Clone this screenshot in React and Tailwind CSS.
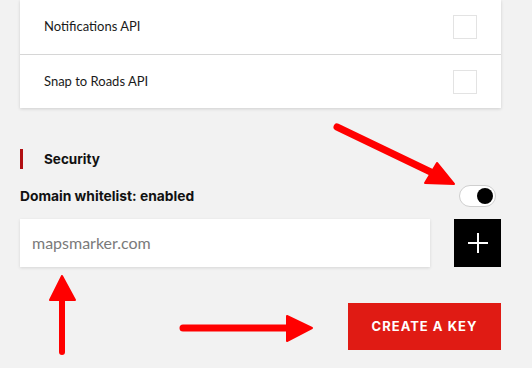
import React from "react";

const apis = ["Notifications API", "Snap to Roads API"];

const Arrows = () => (
  <svg
    className="absolute inset-0 pointer-events-none"
    width="532"
    height="368"
    viewBox="0 0 532 368"
  >
    <g fill="#ff0000" stroke="#ff0000" strokeLinecap="round" strokeLinejoin="round">
      <line x1="337" y1="127" x2="437" y2="175" strokeWidth="7" />
      <polygon points="437,163 425,183 454,184" strokeWidth="2" />
      <line x1="62" y1="352" x2="62" y2="298" strokeWidth="6" />
      <polygon points="62,276 50,300 75,300" strokeWidth="2" />
      <line x1="183" y1="328" x2="290" y2="328" strokeWidth="7" />
      <polygon points="287,316 287,341 312,328" strokeWidth="2" />
    </g>
  </svg>
);

const App = () => {
  return (
    <div
      className="relative w-[532px] h-[368px] overflow-hidden bg-[#f2f2f2] pl-5 pr-[31px]"
      style={{ fontFamily: "Lato, 'Open Sans', sans-serif" }}
    >
      <div className="bg-white shadow-[0_1px_3px_rgba(0,0,0,0.15)]">
        {apis.map((api, index) => (
          <div
            key={api}
            className={`flex items-center justify-between h-[54px] pl-6 pr-6 ${
              index > 0 ? "border-t border-[#d6d6d6]" : ""
            }`}
          >
            <span className="text-[13px] text-[#1a1a1a]">{api}</span>
            <span className="block w-[24px] h-[24px] border border-[#e3e3e3] bg-white"></span>
          </div>
        ))}
      </div>

      <div className="flex items-center h-[20px] mt-[41px]">
        <span className="block w-[3px] h-[20px] bg-[#b10f12]"></span>
        <span className="ml-[21px] text-[13.5px] font-bold text-[#111] font-[Inter,sans-serif]">
          Security
        </span>
      </div>

      <div className="flex items-center justify-between mt-[16px] h-[22px]">
        <span className="text-[13.8px] font-bold text-[#111] font-[Inter,sans-serif]">
          Domain whitelist: enabled
        </span>
        <span className="flex items-center justify-end w-[37px] h-[22px] mr-[5px] rounded-full bg-white border border-[#cfcfcf] pr-[2px]">
          <span className="block w-[16px] h-[16px] rounded-full bg-black"></span>
        </span>
      </div>

      <div className="flex items-stretch justify-between mt-[12px] h-[48px]">
        <div className="flex items-center w-[410px] bg-white shadow-[0_1px_3px_rgba(0,0,0,0.12)] pl-3">
          <span className="text-[16px] text-[#7a7a7a]">mapsmarker.com</span>
        </div>
        <button className="flex items-center justify-center w-[47px] bg-black">
          <svg width="22" height="22" viewBox="0 0 22 22">
            <path d="M11 1v20M1 11h20" stroke="#fff" strokeWidth="2" />
          </svg>
        </button>
      </div>

      <div className="flex justify-end mt-[36px]">
        <button className="w-[153px] h-[47px] bg-[#e01b14] text-white text-[13px] font-bold tracking-[1px] font-[Inter,sans-serif]">
          CREATE A KEY
        </button>
      </div>

      <Arrows />
    </div>
  );
};

export default App;
